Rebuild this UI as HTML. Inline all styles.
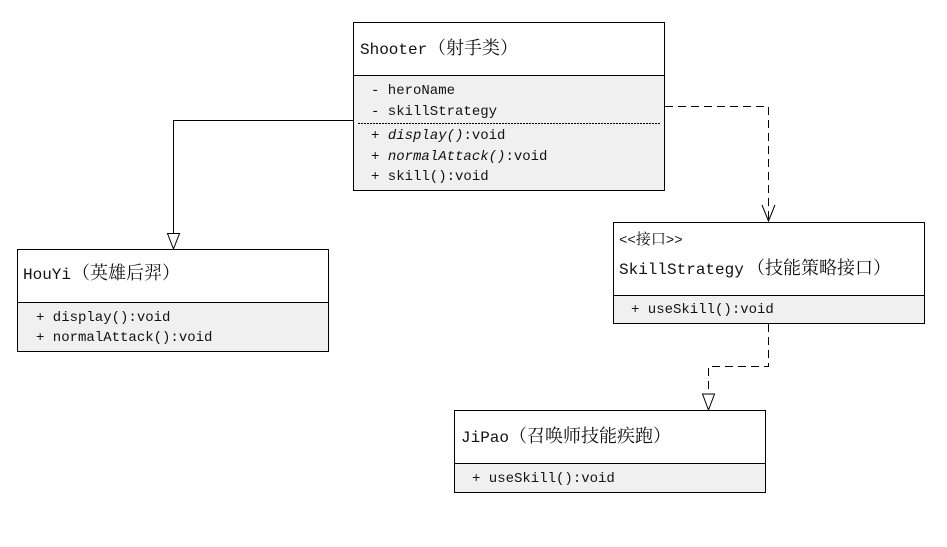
<!DOCTYPE html>
<html><head><meta charset="utf-8"><style>
html,body{margin:0;padding:0;background:#fff;width:947px;height:547px;overflow:hidden}
text{font-family:"Liberation Mono","Noto Serif CJK SC",monospace;fill:#111}
.t{font-size:16px}.m{font-size:14px}
.c{font-family:"Noto Serif CJK SC","Noto Sans CJK SC",serif;font-size:18px}
.cm{font-family:"Noto Serif CJK SC","Noto Sans CJK SC",serif;font-size:15px}
</style></head><body>
<svg width="947" height="547" xmlns="http://www.w3.org/2000/svg">
<g fill="none" stroke="#000" stroke-width="1">
<rect x="353.5" y="22.5" width="311" height="53" fill="#fff"/>
<rect x="353.5" y="75.5" width="311" height="115" fill="#f0f0f0"/>
<line x1="358" y1="123.5" x2="661" y2="123.5" stroke-dasharray="2,1"/>
<rect x="17.5" y="249.5" width="311" height="53" fill="#fff"/>
<rect x="17.5" y="302.5" width="311" height="49" fill="#f0f0f0"/>
<rect x="613.5" y="222.5" width="311" height="73" fill="#fff"/>
<rect x="613.5" y="295.5" width="311" height="28" fill="#f0f0f0"/>
<rect x="454.5" y="410.5" width="311" height="53" fill="#fff"/>
<rect x="454.5" y="463.5" width="311" height="29" fill="#f0f0f0"/>
<polyline points="353,120.5 173.5,120.5 173.5,234"/>
<polygon points="167.5,233.5 179.5,233.5 173.5,249" fill="#fff"/>
<polyline points="665,106.5 768.5,106.5 768.5,221" stroke-dasharray="8,5"/>
<polyline points="762,205 768.5,221 775,205"/>
<polyline points="768.5,324 768.5,366.5 708.5,366.5 708.5,394" stroke-dasharray="8,5"/>
<polygon points="702.5,394 714.5,394 708.5,410" fill="#fff"/>
</g>
<text class="t" x="360" y="54">Shooter<tspan class="c" x="428">（射手类）</tspan></text>
<text class="m" x="371" y="94">- heroName</text>
<text class="m" x="371" y="115">- skillStrategy</text>
<text class="m" x="371" y="139">+ <tspan font-style="italic">display()</tspan>:void</text>
<text class="m" x="371" y="160">+ <tspan font-style="italic">normalAttack()</tspan>:void</text>
<text class="m" x="371" y="180">+ skill():void</text>
<text class="t" x="23" y="279">HouYi<tspan class="c" x="72">（英雄后羿）</tspan></text>
<text class="m" x="36" y="321">+ display():void</text>
<text class="m" x="36" y="341">+ normalAttack():void</text>
<text class="m" x="619" y="244">&lt;&lt;<tspan class="cm">接口</tspan>&gt;&gt;</text>
<text class="t" x="619" y="274">SkillStrategy<tspan class="c" x="747">（技能策略接口）</tspan></text>
<text class="m" x="631" y="313">+ useSkill():void</text>
<text class="t" x="461" y="442">JiPao<tspan class="c" x="509">（召唤师技能疾跑）</tspan></text>
<text class="m" x="472" y="482">+ useSkill():void</text>
</svg>
</body></html>
